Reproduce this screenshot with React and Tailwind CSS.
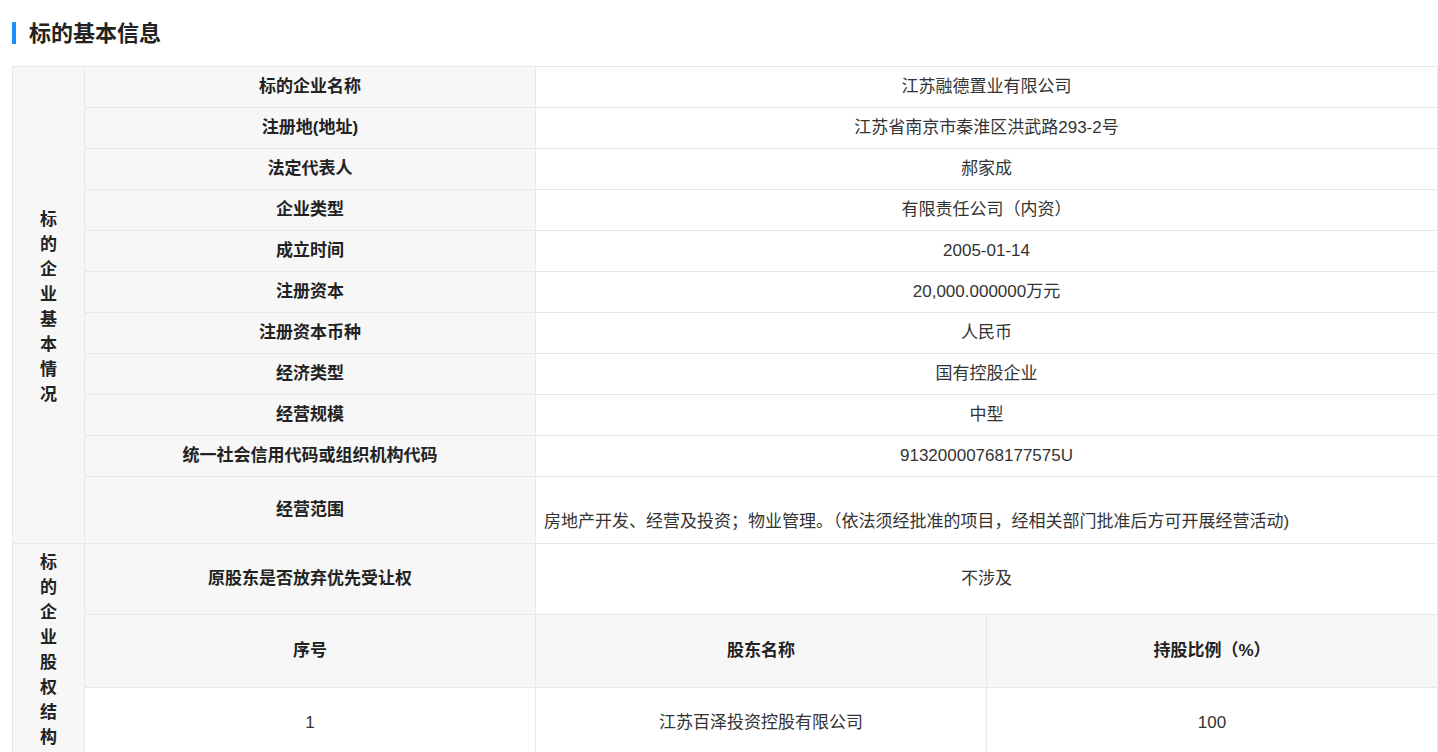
export default function App() {
  const rows = [
    ["标的企业名称", "江苏融德置业有限公司"],
    ["注册地(地址)", "江苏省南京市秦淮区洪武路293-2号"],
    ["法定代表人", "郝家成"],
    ["企业类型", "有限责任公司（内资）"],
    ["成立时间", "2005-01-14"],
    ["注册资本", "20,000.000000万元"],
    ["注册资本币种", "人民币"],
    ["经济类型", "国有控股企业"],
    ["经营规模", "中型"],
    ["统一社会信用代码或组织机构代码", "91320000768177575U"],
  ];
  const lab = "border border-[#e8e8e8] bg-[#f7f7f7] font-bold text-center text-[#222]";
  const val = "border border-[#e8e8e8] bg-white text-center text-[#333]";
  const vert = (s) => s.split("").map((c, i) => <div key={i} className="leading-[25px]">{c}</div>);
  return (
    <div className="bg-white w-[1438px] h-[752px] overflow-hidden text-[17px]" style={{ fontFamily: '"Liberation Sans","Noto Sans CJK SC",sans-serif' }}>
      <div className="flex items-center h-[66px] pl-[12px]">
        <div className="w-[4px] h-[22px] bg-[#1890ff]" />
        <div className="ml-[13px] text-[22px] font-bold text-[#222]">标的基本信息</div>
      </div>
      <table className="ml-[12px] w-[1425px] table-fixed border-collapse">
        <colgroup>
          <col className="w-[72px]" />
          <col className="w-[451px]" />
          <col className="w-[451px]" />
          <col className="w-[451px]" />
        </colgroup>
        <tbody>
          {rows.map((r, i) => (
            <tr key={i} className="h-[41px]">
              {i === 0 && (
                <td rowSpan={11} className={lab + " align-middle pt-[4px]"}>{vert("标的企业基本情况")}</td>
              )}
              <td className={lab}>{r[0]}</td>
              <td colSpan={2} className={val}>{r[1]}</td>
            </tr>
          ))}
          <tr className="h-[67px]">
            <td className={lab}>经营范围</td>
            <td colSpan={2} className={val + " text-left pl-[8px] pt-[24px]"}>房地产开发、经营及投资；物业管理。（依法须经批准的项目，经相关部门批准后方可开展经营活动)</td>
          </tr>
          <tr className="h-[71px]">
            <td rowSpan={4} className={lab + " align-top pt-[6px]"}>{vert("标的企业股权结构")}</td>
            <td className={lab}>原股东是否放弃优先受让权</td>
            <td colSpan={2} className={val}>不涉及</td>
          </tr>
          <tr className="h-[73px]">
            <td className={lab}>序号</td>
            <td className={lab}>股东名称</td>
            <td className={lab}>持股比例（%）</td>
          </tr>
          <tr className="h-[70px]">
            <td className={val}>1</td>
            <td className={val}>江苏百泽投资控股有限公司</td>
            <td className={val}>100</td>
          </tr>
          <tr className="h-[60px]">
            <td className={val}></td>
            <td className={val}></td>
            <td className={val}></td>
          </tr>
        </tbody>
      </table>
    </div>
  );
}
